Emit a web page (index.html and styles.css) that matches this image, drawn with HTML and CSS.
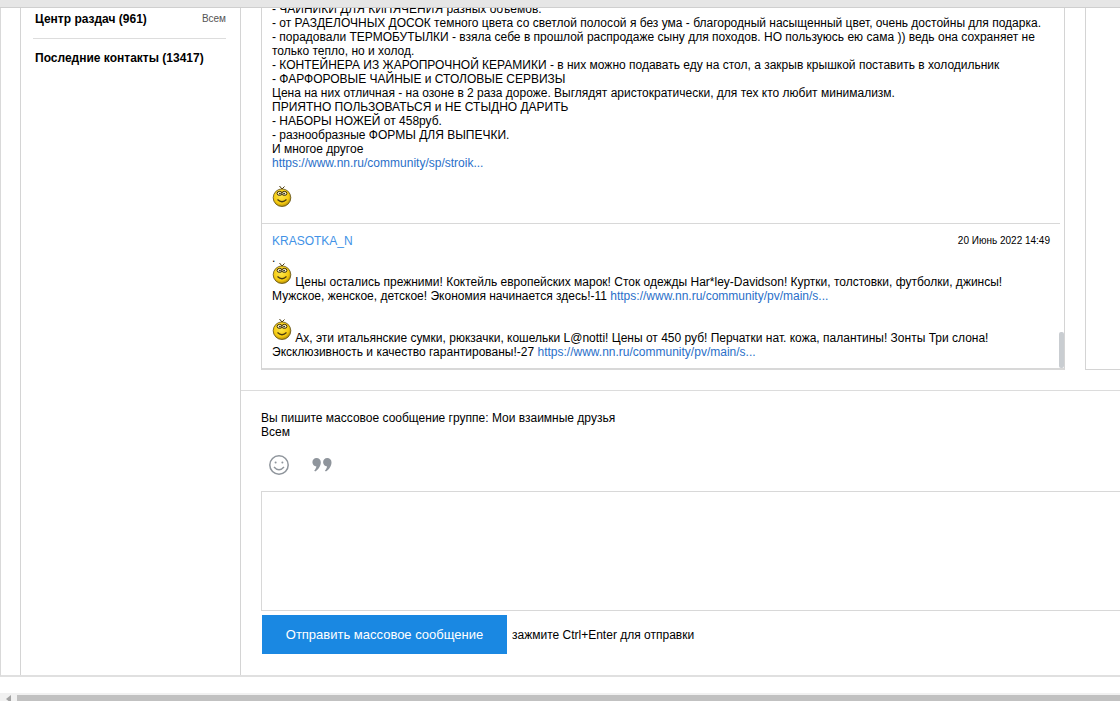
FILE: index.html
```html
<!DOCTYPE html>
<html lang="ru">
<head>
<meta charset="utf-8">
<title>Массовое сообщение</title>
<link rel="stylesheet" href="styles.css">
</head>
<body>
<svg class="defs" width="0" height="0" aria-hidden="true">
  <defs>
    <radialGradient id="face" cx="45%" cy="40%" r="62%">
      <stop offset="0" stop-color="#ffe84a"/>
      <stop offset=".7" stop-color="#f4c910"/>
      <stop offset="1" stop-color="#a98608"/>
    </radialGradient>
  </defs>
  <symbol id="smiley" viewBox="0 0 20 22">
    <path d="M10 4 L7.5 1 M10 4 L12.5 1.5" stroke="#4a3b10" stroke-width="1" fill="none"/>
    <circle cx="10" cy="12.7" r="8.8" fill="url(#face)" stroke="#5f4c0c" stroke-width=".8"/>
    <ellipse cx="7.6" cy="8.4" rx="2.5" ry="2" fill="#fff6c0" stroke="#3a2c08" stroke-width="1"/>
    <ellipse cx="12.4" cy="8.4" rx="2.5" ry="2" fill="#fff6c0" stroke="#3a2c08" stroke-width="1"/>
    <circle cx="7.9" cy="8.6" r=".9" fill="#222"/>
    <circle cx="12.1" cy="8.6" r=".9" fill="#222"/>
    <path d="M5.5 14.5 Q10 19 14.5 14.5" stroke="#4a3b10" stroke-width="1.2" fill="none"/>
  </symbol>
</svg>
<div class="topband"></div>
<div class="page">
  <div class="gutter"></div>
  <aside class="sidebar">
    <div class="side-row side-first"><b>Центр раздач (961)</b><span class="side-all">Всем</span></div>
    <div class="side-row side-second"><b>Последние контакты (13417)</b></div>
  </aside>
  <main class="main">
    <div class="top-area">
      <section class="messages">
        <div class="scrolled">
          <div class="message first-message">
            <p>- ЧАЙНИКИ ДЛЯ КИПЯЧЕНИЯ разных объемов.</p>
            <p>- от РАЗДЕЛОЧНЫХ ДОСОК темного цвета со светлой полосой я без ума - благородный насыщенный цвет, очень достойны для подарка.</p>
            <p>- порадовали ТЕРМОБУТЫЛКИ - взяла себе в прошлой распродаже сыну для походов. НО пользуюсь ею сама )) ведь она сохраняет не<br>только тепло, но и холод.</p>
            <p>- КОНТЕЙНЕРА ИЗ ЖАРОПРОЧНОЙ КЕРАМИКИ - в них можно подавать еду на стол, а закрыв крышкой поставить в холодильник</p>
            <p>- ФАРФОРОВЫЕ ЧАЙНЫЕ и СТОЛОВЫЕ СЕРВИЗЫ</p>
            <p>Цена на них отличная - на озоне в 2 раза дороже. Выглядят аристократически, для тех кто любит минимализм.</p>
            <p>ПРИЯТНО ПОЛЬЗОВАТЬСЯ и НЕ СТЫДНО ДАРИТЬ</p>
            <p>- НАБОРЫ НОЖЕЙ от 458руб.</p>
            <p>- разнообразные ФОРМЫ ДЛЯ ВЫПЕЧКИ.</p>
            <p>И многое другое</p>
            <p><a href="#">https://www.nn.ru/community/sp/stroik...</a></p>
            <svg class="smiley solo"><use href="#smiley"/></svg>
          </div>
          <div class="message second-message">
            <div class="msg-head"><a class="author" href="#">KRASOTKA_N</a><span class="date">20 Июнь 2022 14:49</span></div>
            <p class="dot">.</p>
            <p class="smile-par"><svg class="smiley"><use href="#smiley"/></svg> Цены остались прежними! Коктейль европейских марок! Сток одежды Har*ley-Davidson! Куртки, толстовки, футболки, джинсы!<br>Мужское, женское, детское! Экономия начинается здесь!-11 <a href="#">https://www.nn.ru/community/pv/main/s...</a></p>
            <p class="smile-par gap"><svg class="smiley"><use href="#smiley"/></svg> Ах, эти итальянские сумки, рюкзачки, кошельки L@notti! Цены от 450 руб! Перчатки нат. кожа, палантины! Зонты Три слона!<br>Эксклюзивность и качество гарантированы!-27 <a href="#">https://www.nn.ru/community/pv/main/s...</a></p>
          </div>
        </div>
        <div class="msg-thumb"></div>
      </section>
      <div class="right-box"></div>
    </div>
    <div class="composer">
      <p class="to">Вы пишите массовое сообщение группе: Мои взаимные друзья<br>Всем</p>
      <div class="tools">
        <svg class="tool-smile" width="22" height="22" viewBox="0 0 22 22" fill="none" stroke="#8f959c" stroke-width="1.5">
          <circle cx="11" cy="11" r="9.2"/>
          <circle cx="7.6" cy="8.6" r="1" fill="#8f959c" stroke="none"/>
          <circle cx="14.4" cy="8.6" r="1" fill="#8f959c" stroke="none"/>
          <path d="M6 13 Q11 18.5 16 13"/>
        </svg>
        <svg class="tool-quote" width="20" height="16" viewBox="0 0 20 16" fill="#8f959c">
          <path d="M4.5 1 C7 1 8.8 2.8 8.8 5.2 C8.8 9 6.5 12.5 3.2 14.6 L2.2 13.6 C3.4 12.2 4.2 10.8 4.4 9.4 C2.2 9.3 .4 7.5 .4 5.2 C.4 2.8 2.2 1 4.5 1 Z"/>
          <path d="M15.2 1 C17.7 1 19.5 2.8 19.5 5.2 C19.5 9 17.2 12.5 13.9 14.6 L12.9 13.6 C14.1 12.2 14.9 10.8 15.1 9.4 C12.9 9.3 11.1 7.5 11.1 5.2 C11.1 2.8 12.9 1 15.2 1 Z"/>
        </svg>
      </div>
      <div class="textbox"></div>
      <div class="send-row">
        <button class="send" type="button">Отправить массовое сообщение</button>
        <span class="hint">зажмите Ctrl+Enter для отправки</span>
      </div>
    </div>
  </main>
</div>
<div class="hscroll">
  <div class="arrow-cell"><span class="arrow"></span></div>
  <div class="hthumb"></div>
</div>
</body>
</html>
```
FILE: styles.css
```css
html, body {
  margin: 0;
  padding: 0;
  height: 701px;
  overflow: hidden;
  background: #fff;
}
body {
  display: flex;
  flex-direction: column;
  font: 12px/14px "Liberation Sans", Arial, sans-serif;
  color: #000;
}
.defs { position: absolute; }
p { margin: 0; }
a { color: #2a6fc9; text-decoration: none; }

.topband {
  height: 7px;
  flex: none;
  background: #e6e6e6;
  border-bottom: 1px solid #cfcfcf;
}
.page {
  display: flex;
  flex: none;
  height: 667px;
  border-left: 1px solid #d9d9d9;
  border-bottom: 2px solid #e0e0e0;
  overflow: hidden;
}
.gutter {
  width: 19px;
  flex: none;
  border-right: 1px solid #d4d4d4;
}
.sidebar {
  flex: none;
  border-right: 1px solid #d4d4d4;
  padding: 4px 14px 0 12px;
  box-sizing: border-box;
  width: 220px;
}
.side-row {
  display: flex;
  justify-content: space-between;
  align-items: center;
  padding-left: 2px;
}
.side-first {
  padding-bottom: 12px;
  border-bottom: 1px solid #ddd;
}
.side-second { padding-top: 12px; }
.side-all { font-size: 10px; color: #555; }

.main {
  flex: 1;
  min-width: 0;
  display: flex;
  flex-direction: column;
}
.top-area {
  display: flex;
  height: 383px;
  flex: none;
  padding-left: 20px;
  box-sizing: border-box;
  border-bottom: 1px solid #dcdcdc;
  padding-bottom: 20px;
}
.messages {
  position: relative;
  width: 804px;
  flex: none;
  box-sizing: border-box;
  border-left: 1px solid #d4d4d4;
  border-right: 1px solid #d4d4d4;
  border-bottom: 2px solid #d8d8d8;
  overflow: hidden;
}
.scrolled {
  margin-top: -6px;
  padding-right: 4px;
}
.message { padding-left: 10px; padding-right: 10px; }
.first-message {
  height: 222px;
  box-sizing: border-box;
  border-bottom: 1px solid #d8d8d8;
}
.smiley {
  display: inline-block;
  width: 20px;
  height: 22px;
  vertical-align: 2px;
}
.smiley.solo {
  display: block;
  margin-top: 15px;
}
.msg-head {
  display: flex;
  justify-content: space-between;
  align-items: center;
  padding-top: 10px;
}
.author { color: #4192e6; }
.date { font-size: 10px; }
.dot { margin: 3px 0 -3px; }
.gap { margin-top: 15px; }
.msg-thumb {
  position: absolute;
  right: 0;
  bottom: 0;
  width: 5px;
  height: 36px;
  border-radius: 2px;
  background: #c9cdd1;
}
.right-box {
  flex: 1;
  margin-left: 20px;
  border-left: 1px solid #d4d4d4;
  border-bottom: 1px solid #d4d4d4;
}
.composer { padding: 20px 0 0 20px; }
.to { height: 28px; }
.tools {
  display: flex;
  align-items: center;
  gap: 22px;
  height: 30px;
  margin-top: 11px;
  padding-left: 7px;
}
.textbox {
  box-sizing: border-box;
  height: 120px;
  margin-top: 11px;
  border: 1px solid #d8d8d8;
  border-right: 0;
}
.send-row {
  display: flex;
  align-items: center;
  gap: 5px;
  margin-top: 4px;
  padding-left: 1px;
}
.send {
  width: 245px;
  height: 39px;
  padding: 0;
  border: 0;
  background: #1a88e2;
  color: #fff;
  font: 13px "Liberation Sans", Arial, sans-serif;
}
.hscroll {
  display: flex;
  flex: none;
  height: 8px;
  margin-top: 16px;
  background: #f1f1f1;
  padding-top: 2px;
}
.arrow-cell {
  width: 17px;
  flex: none;
  display: flex;
  align-items: center;
  justify-content: center;
}
.arrow {
  border: 4px solid transparent;
  border-left-width: 0;
  border-right: 5px solid #a3a3a3;
}
.hthumb { flex: 1; background: #c1c1c1; }
```
